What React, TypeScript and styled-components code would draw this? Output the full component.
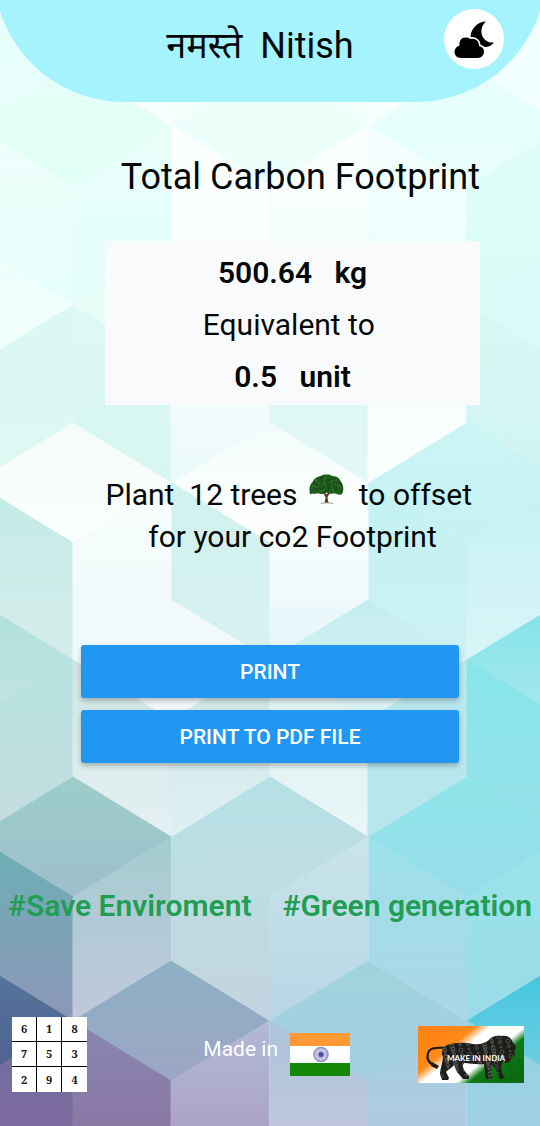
import React from "react";
import styled, { createGlobalStyle } from "styled-components";

const GlobalStyle = createGlobalStyle`
  *, *::before, *::after { box-sizing: border-box; }
  html, body { margin: 0; padding: 0; }
  body {
    font-family: Roboto, "Noto Sans Devanagari", "Noto Sans", sans-serif;
    color: #050808;
    background: #e6faf8;
  }
`;

/* ---------- cube pattern behind the page ---------- */

type Shade = [string, string];
type Cube = { x: number; top?: Shade; left?: Shade; right?: Shade };
type CubeRow = { y: number; next: number; cubes: Cube[] };

const HALF = 98;
const RISE = 60;

const cubeRows: CubeRow[] = [
  {
    y: -112,
    next: 66,
    cubes: [
      { x: -25, right: ["#e6fffb", "#e8fffb"] },
      { x: 171, left: ["#effffd", "#f8ffff"], right: ["#effffb", "#f4fffd"] },
      { x: 368, left: ["#effffb", "#f2fffc"], right: ["#f6fffe", "#f6fffe"] },
      { x: 565, left: ["#effffd", "#f2fffe"] },
    ],
  },
  {
    y: 66,
    next: 245,
    cubes: [
      { x: 73, top: ["#e6fff9", "#e0fff5"], left: ["#effffc", "#e6fffa"], right: ["#e8fffa", "#e4fdf8"] },
      { x: 270, top: ["#ecfffa", "#ecfffa"], left: ["#fdffff", "#fbffff"], right: ["#fcffff", "#effdfb"] },
      { x: 467, top: ["#e6fffa", "#e8fffc"], left: ["#f4fffe", "#e9fffb"], right: ["#e0fdf8", "#dafcf6"] },
    ],
  },
  {
    y: 245,
    next: 423,
    cubes: [
      { x: -25, top: ["#ecfffb", "#f3fffd"], right: ["#dcf8f2", "#def8f2"] },
      { x: 171, top: ["#e6fdf8", "#e6fdf8"], left: ["#dff9f4", "#d6f6ef"], right: ["#ffffff", "#eaf9f9"] },
      { x: 368, top: ["#f4fefd", "#f4fefd"], left: ["#d8f7f1", "#e4f8f6"], right: ["#f4fdfd", "#fafefe"] },
      { x: 565, top: ["#dcfbf7", "#dbf9f6"], left: ["#d6f8f5", "#cff4f3"] },
    ],
  },
  {
    y: 423,
    next: 600,
    cubes: [
      { x: 73, top: ["#f4fcfa", "#fafefd"], left: ["#c2ece6", "#d5ecea"], right: ["#f7fdfc", "#eef9fa"] },
      { x: 270, top: ["#f2fbfb", "#ffffff"], left: ["#d0f2ee", "#d8f1f1"], right: ["#ffffff", "#e4f6f9"] },
      { x: 467, top: ["#c9f5f5", "#c6f2f3"], left: ["#c3f1f2", "#cdf2f4"], right: ["#c4f2f3", "#d9f4f7"] },
    ],
  },
  {
    y: 600,
    next: 777,
    cubes: [
      { x: -25, top: ["#aee0dc", "#c2e4e2"], right: ["#b4e2de", "#c6dde2"] },
      { x: 171, top: ["#f2fafb", "#f0f6f6"], left: ["#cfe5e3", "#e5f0f2"], right: ["#cee5e4", "#def0f2"] },
      { x: 368, top: ["#c3edf0", "#def2f4"], left: ["#ddeff1", "#eaf6f7"], right: ["#b8e7eb", "#b6e6ec"] },
      { x: 565, top: ["#7fe2e9", "#a9e9ed"], left: ["#86e6e9", "#97e0ea"] },
    ],
  },
  {
    y: 777,
    next: 961,
    cubes: [
      { x: 73, top: ["#9dcdcb", "#9dbfcb"], left: ["#6bb0b5", "#8d97b9"], right: ["#a3cdd0", "#c1c8dc"] },
      { x: 270, top: ["#b4e1e5", "#c0dce4"], left: ["#bae1e1", "#c4d3e0"], right: ["#c9e5e9", "#b7d5e5"] },
      { x: 467, top: ["#8ee5e9", "#97dcea"], left: ["#9ce1ea", "#add6e5"], right: ["#9ae4eb", "#9adbe8"] },
    ],
  },
  {
    y: 961,
    next: 1140,
    cubes: [
      { x: -25, top: ["#54779c", "#4f5f90"], right: ["#6d71a2", "#88659a"] },
      { x: 171, top: ["#8cb0c4", "#9da5c5"], left: ["#8886b2", "#8c6d9c"], right: ["#b2bad5", "#a894bd"] },
      { x: 368, top: ["#a0d3dd", "#a4cde1"], left: ["#abc4db", "#cbc9de"], right: ["#a4cfe2", "#b4c8df"] },
      { x: 565, top: ["#3fc5df", "#72cfe1"], left: ["#93d1e4", "#a9cfe5"] },
    ],
  },
];

const faces = cubeRows.flatMap(({ y, next, cubes }) =>
  cubes.flatMap(({ x, top, left, right }) => {
    const list: { id: string; shade: Shade; points: string }[] = [];
    const mid = y + RISE;
    const low = y + RISE * 2;
    if (top)
      list.push({
        id: `t${x}-${y}`,
        shade: top,
        points: `${x},${y} ${x + HALF},${mid} ${x},${low} ${x - HALF},${mid}`,
      });
    if (left)
      list.push({
        id: `l${x}-${y}`,
        shade: left,
        points: `${x - HALF},${mid} ${x},${low} ${x},${next + RISE} ${x - HALF},${next}`,
      });
    if (right)
      list.push({
        id: `r${x}-${y}`,
        shade: right,
        points: `${x + HALF},${mid} ${x},${low} ${x},${next + RISE} ${x + HALF},${next}`,
      });
    return list;
  })
);

const Backdrop = styled.svg`
  position: absolute;
  inset: 0;
  width: 100%;
  height: 100%;
  z-index: -1;
`;

function CubePattern() {
  return (
    <Backdrop viewBox="0 0 540 1126" preserveAspectRatio="none" aria-hidden="true">
      <defs>
        {faces.map((f) => (
          <linearGradient key={f.id} id={f.id} x1="0" y1="0" x2="0" y2="1">
            <stop offset="0" stopColor={f.shade[0]} />
            <stop offset="1" stopColor={f.shade[1]} />
          </linearGradient>
        ))}
      </defs>
      {faces.map((f) => (
        <polygon key={f.id} points={f.points} fill={`url(#${f.id})`} stroke={`url(#${f.id})`} strokeWidth="1" />
      ))}
    </Backdrop>
  );
}

/* ---------- page ---------- */

const Page = styled.main`
  position: relative;
  isolation: isolate;
  display: flex;
  flex-direction: column;
  min-height: 100vh;
  overflow: hidden;
`;

/* The bar runs past the top and sides so that its round corners are cut off by the page edge. */
const Header = styled.header`
  display: grid;
  grid-template-columns: 60px 1fr 60px;
  gap: 20px;
  align-items: start;
  height: 130px;
  margin: -28px -6px 0;
  padding: 37px 42px 0 22px;
  background: #a4f3fd;
  border-radius: 0 0 130px 130px;
`;

const Greeting = styled.h1`
  grid-column: 2;
  margin: 0;
  padding-top: 13px;
  font-size: 36px;
  line-height: 48px;
  font-weight: 400;
  text-align: center;
  white-space: pre;
`;

const ThemeButton = styled.button`
  display: grid;
  place-items: center;
  width: 60px;
  height: 60px;
  padding: 0;
  border: 0;
  border-radius: 50%;
  background: #fff;
  cursor: pointer;
`;

const Summary = styled.section`
  padding: 54px 60px 0 105px;
`;

const Title = styled.h2`
  margin: 0 0 43px;
  font-size: 36px;
  line-height: 42px;
  font-weight: 400;
  text-align: right;
  white-space: nowrap;
`;

const Card = styled.div`
  padding: 6px 0 2px;
  background: #f9fafc;
  text-align: center;
`;

const Figure = styled.p<{ $strong?: boolean }>`
  margin: 0;
  font-size: 30px;
  line-height: 52px;
  font-weight: ${(p) => (p.$strong ? 600 : 400)};
  white-space: pre;
`;

const Advice = styled.p`
  margin: 69px 0 0;
  font-size: 30px;
  line-height: 42px;
  text-align: center;
`;

const AdviceLine = styled.span`
  display: flex;
  justify-content: center;
  height: 42px;
  white-space: pre;
`;

const TreeIcon = styled.svg`
  width: 35px;
  height: 30px;
  margin-left: 4px;
`;

const Actions = styled.div`
  display: flex;
  flex-direction: column;
  gap: 12px;
  padding: 87px 15% 0;
`;

const ActionButton = styled.button`
  height: 53px;
  padding: 1px 16px 0;
  border: 0;
  border-radius: 3px;
  background: #2196f3;
  box-shadow: 0 3px 5px rgba(0, 0, 0, 0.24);
  color: #fff;
  font-family: inherit;
  font-size: 21px;
  line-height: 24px;
  font-weight: 500;
  text-transform: uppercase;
  cursor: pointer;
`;

const Tags = styled.div`
  display: flex;
  justify-content: space-between;
  padding: 123px 8px 0;
  color: #219e53;
  font-size: 30px;
  line-height: 40px;
  font-weight: 600;
  white-space: nowrap;
`;

const Footer = styled.footer`
  display: grid;
  grid-template-columns: 11fr auto 10fr;
  align-items: center;
  margin-top: auto;
  padding: 0 16px 34px 12px;
`;

const Square = styled.table`
  width: 75px;
  height: 75px;
  border-collapse: separate;
  border-spacing: 0;
  background: #fff;
  table-layout: fixed;
`;

const Digit = styled.td`
  width: 25px;
  height: 25px;
  padding: 0;
  border: 0 solid #000;
  color: #111;
  font-family: "Noto Serif", "Liberation Serif", serif;
  font-size: 11px;
  line-height: 14px;
  font-weight: 700;
  text-align: center;
  &:not(:last-child) { border-right-width: 1px; }
  tr:not(:last-child) > & { border-bottom-width: 1px; }
`;

const MadeIn = styled.div`
  display: flex;
  align-items: center;
  gap: 12px;
  color: #fff;
  font-size: 21px;
  line-height: 24px;
`;

const MadeInText = styled.span`
  padding-bottom: 12px;
`;

const FlagArt = styled.svg`
  width: 60px;
  height: 43px;
`;

const LionArt = styled.svg`
  justify-self: end;
  width: 106px;
  height: 57px;
`;

function MoonCloud() {
  return (
    <svg width="42" height="38" viewBox="0 0 42 38" aria-hidden="true">
      <path
        d="M33 1.500C25 1.500 18 8 17.500 17C22 18 25 20.500 26 24C29 27.500 36 29 41 22.500C34 23.500 29 18 28.500 13C28 8 30 4 33 1.500Z"
        fill="#000"
      />
      <path
        d="M8 38C4 38 1.500 35 1.500 32C1.500 28.500 4 26.500 6.500 25.500C6 20 9 17 13 17.500C15.500 17.500 16.500 18.500 17 19C22 17.500 26.500 21 26 26C29 26.500 31 28.500 31 31.500C31 35 28.500 38 25 38Z"
        fill="#000"
        stroke="#fff"
        strokeWidth="3"
        paintOrder="stroke"
      />
    </svg>
  );
}

const leafDots = Array.from({ length: 90 }, (_, i) => {
  const a = i * 2.4;
  const r = Math.sqrt(i / 90);
  return { x: 18 + Math.cos(a) * r * 15, y: 11 + Math.sin(a) * r * 8, c: ["#1d5a1c", "#2f7427", "#164a16"][i % 3] };
});

function Tree() {
  return (
    <TreeIcon viewBox="0 0 36 31" role="img" aria-label="tree">
      <path d="M16 30L17 24L14 18L18 21L23 17L19 24L20 30Z" fill="#5b3b2b" />
      <path d="M12 30.500C15 29.500 21 29.500 25 30.500" stroke="#a8988a" strokeWidth="1" fill="none" />
      <path
        d="M1 21C0 16 0 11 4 8C5 4 9 3 12 2C15 0 21 0 24 2C29 2 32 5 33 8C36 12 36 17 34 21C32 22 29 21 26 20C23 21 20 20 18 19C16 21 12 21 9 20C6 21 3 20 1 21Z"
        fill="#205a1d"
      />
      {leafDots.map((d, i) => (
        <circle key={i} cx={d.x} cy={d.y} r="1" fill={d.c} />
      ))}
    </TreeIcon>
  );
}

function Flag() {
  return (
    <FlagArt viewBox="0 0 60 43" role="img" aria-label="India">
      <rect width="60" height="43" fill="#fff" />
      <rect width="60" height="13" fill="#ff9933" />
      <rect y="30" width="60" height="13" fill="#138808" />
      <circle cx="31" cy="21.500" r="7" fill="#d8d8ee" stroke="#8f8fc6" strokeWidth="1.500" />
      {Array.from({ length: 12 }, (_, i) => (
        <line
          key={i}
          x1="31"
          y1="14.500"
          x2="31"
          y2="28.500"
          stroke="#8f8fc6"
          strokeWidth=".4"
          transform={`rotate(${i * 15} 31 21.500)`}
        />
      ))}
      <circle cx="31" cy="21.500" r="2.500" fill="#4c4ca0" />
    </FlagArt>
  );
}

const gears = Array.from({ length: 110 }, (_, i) => ({
  x: 24 + ((i * 37) % 73),
  y: 11 + ((i * 23) % 41),
  r: 1 + (i % 3) * 0.5,
}));

function MakeInIndia() {
  return (
    <LionArt viewBox="0 0 106 57" role="img" aria-label="Make in India">
      <defs>
        <linearGradient id="tricolour" gradientUnits="userSpaceOnUse" x1="24" y1="2" x2="76" y2="66">
          <stop offset="0" stopColor="#ff8412" />
          <stop offset=".24" stopColor="#ff8a1c" />
          <stop offset=".36" stopColor="#ffffff" />
          <stop offset=".62" stopColor="#ffffff" />
          <stop offset=".72" stopColor="#0f7a16" />
          <stop offset="1" stopColor="#0b6a10" />
        </linearGradient>
        <clipPath id="lion">
          <path d="M27 20C35 16 46 16 55 18C62 19 67 17 71 14C73 10 80 9 84 10C89 9 94 12 95 17C99 20 98 23 96 25C98 29 96 32 93 33C92 37 87 38 84 36C83 40 83 44 84 47L87 52L82 53L78 44L74 38C73 42 72 46 74 49L74 53L68 53L67 47L66 38C58 39 52 37 46 37C43 41 47 46 51 50L51 53L45 53L39 46L36 39C33 43 29 44 28 46L31 52L30 54L24 54L22 48C22 42 25 36 25 31C23 27 24 23 27 20Z" />
        </clipPath>
      </defs>
      <rect width="106" height="57" fill="url(#tricolour)" />
      <path
        d="M30 22C22 22 12 20 10 27C8 34 12 38 18 40"
        fill="none"
        stroke="#1b1b19"
        strokeWidth="2"
      />
      <path d="M14 36L21 40L19 43L13 40Z" fill="#1b1b19" />
      <g clipPath="url(#lion)">
        <rect width="106" height="57" fill="#1d1d1b" />
        {gears.map((g, i) => (
          <circle key={i} cx={g.x} cy={g.y} r={g.r} fill="none" stroke="#73736c" strokeWidth=".6" />
        ))}
      </g>
      <text x="29" y="35" fill="#fff" fontFamily="Lato, sans-serif" fontSize="8" fontWeight="700">
        MAKE IN INDIA
      </text>
    </LionArt>
  );
}

const magicSquare = [
  [6, 1, 8],
  [7, 5, 3],
  [2, 9, 4],
];

export default function App() {
  return (
    <>
      <GlobalStyle />
      <Page>
        <CubePattern />
        <Header>
          <Greeting>{"नमस्ते  Nitish"}</Greeting>
          <ThemeButton type="button" aria-label="Switch to dark theme">
            <MoonCloud />
          </ThemeButton>
        </Header>

        <Summary>
          <Title>Total Carbon Footprint</Title>
          <Card>
            <Figure $strong>{"500.64   kg"}</Figure>
            <Figure>{"Equivalent to "}</Figure>
            <Figure $strong>{"0.5   unit"}</Figure>
          </Card>
          <Advice>
            <AdviceLine>
              <span>{"Plant  12 trees "}</span>
              <Tree />
              <span>{"  to offset "}</span>
            </AdviceLine>
            <AdviceLine>for your co2 Footprint</AdviceLine>
          </Advice>
        </Summary>

        <Actions>
          <ActionButton type="button">Print</ActionButton>
          <ActionButton type="button">Print to PDF file</ActionButton>
        </Actions>

        <Tags>
          <span>#Save Enviroment</span>
          <span>#Green generation</span>
        </Tags>

        <Footer>
          <Square aria-label="Magic square">
            <tbody>
              {magicSquare.map((row) => (
                <tr key={row.join("")}>
                  {row.map((n) => (
                    <Digit key={n}>{n}</Digit>
                  ))}
                </tr>
              ))}
            </tbody>
          </Square>
          <MadeIn>
            <MadeInText>Made in</MadeInText>
            <Flag />
          </MadeIn>
          <MakeInIndia />
        </Footer>
      </Page>
    </>
  );
}
